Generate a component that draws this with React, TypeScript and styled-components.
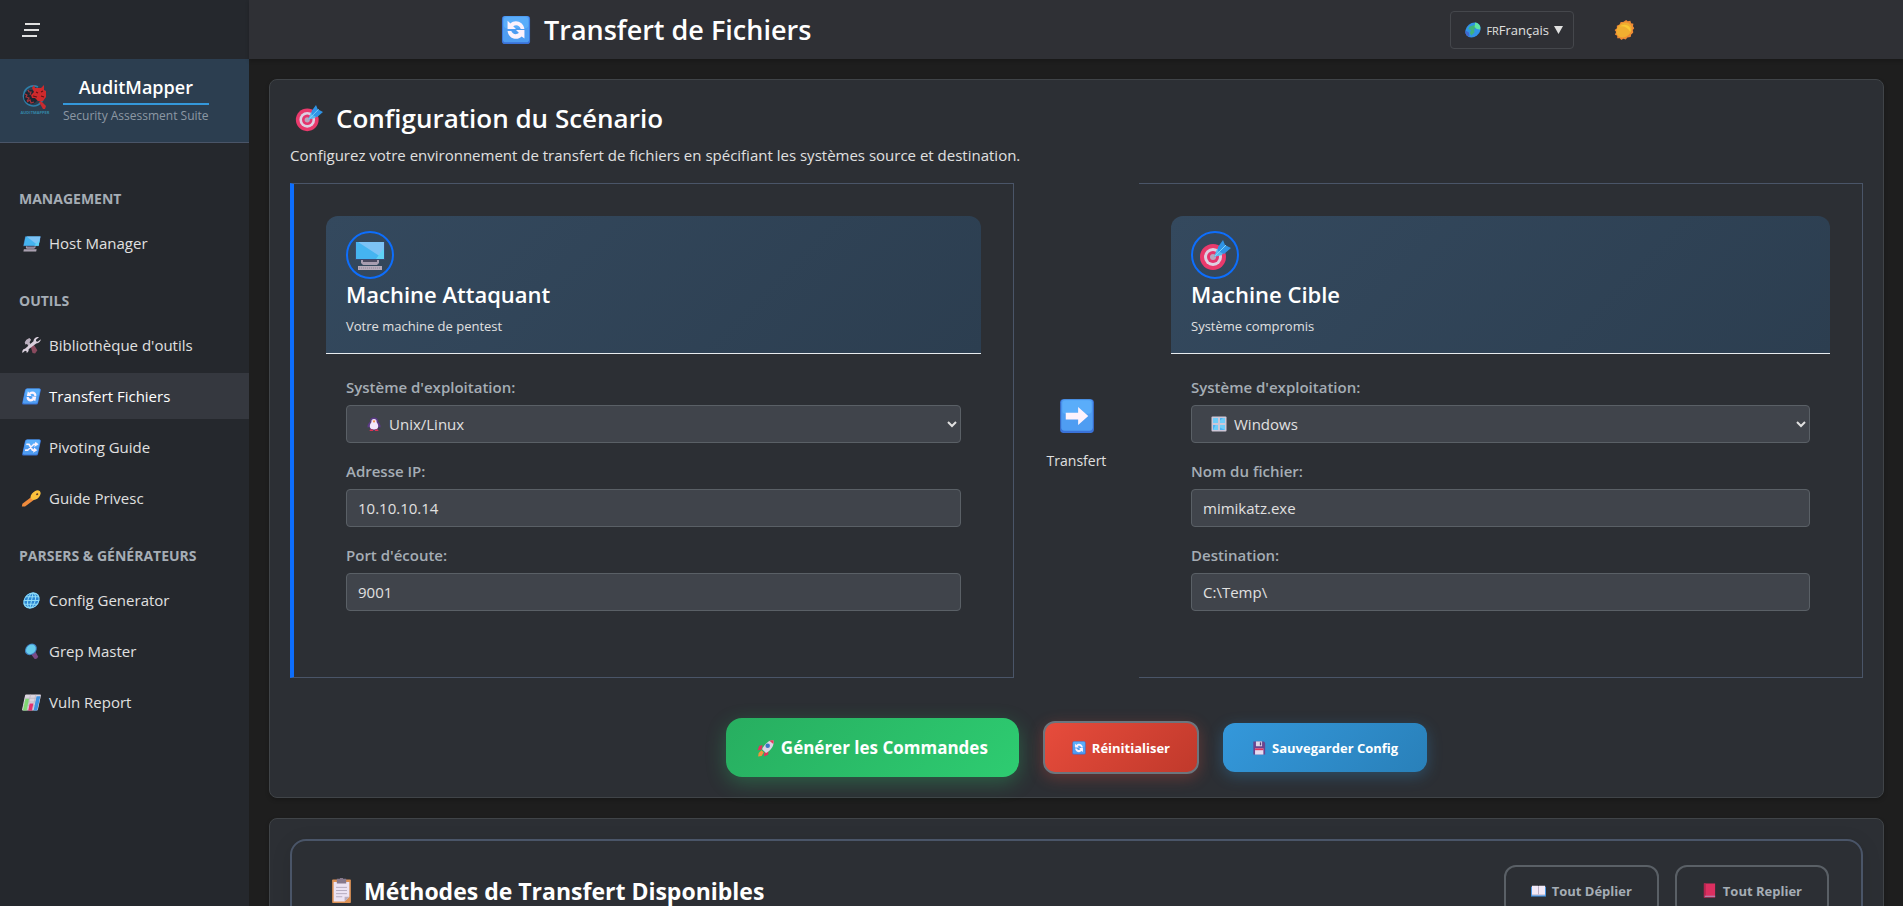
import React from 'react';
import styled, { createGlobalStyle, css } from 'styled-components';

const GlobalStyle = createGlobalStyle`
  *, *::before, *::after { box-sizing: border-box; }
  body {
    margin: 0;
    background: #1e1e1e;
    color: #e0e0e0;
    font-family: 'Open Sans', 'Noto Sans', sans-serif;
    font-size: 15px;
    line-height: 24px;
  }
  h1, h2, h3, p { margin: 0; }
  button, input, select { font-family: inherit; }
`;

/* ---------- Icons ---------- */

type IconName =
  | 'computer' | 'tools' | 'refresh' | 'shuffle' | 'key' | 'globe' | 'magnifier' | 'chart'
  | 'target' | 'earth' | 'sun' | 'penguin' | 'window' | 'arrow' | 'rocket' | 'floppy'
  | 'clipboard' | 'openBook' | 'book';

const BlueTile = () => (
  <>
    <rect x="1" y="1" width="30" height="30" rx="3" fill="#3a72d8" />
    <rect x="2" y="1" width="28" height="28" rx="3" fill="#4f9df2" />
    <rect x="3" y="2" width="26" height="12" rx="3" fill="#5aadfa" />
  </>
);

const glyphs: Record<IconName, React.ReactNode> = {
  computer: (
    <>
      <path d="M1 3h30v18H1z" fill="#3b4a72" />
      <path d="M2 3h28v17H2z" fill="#45b4f0" />
      <path d="M4 3h26v17z" fill="#7dc3f5" />
      <path d="M30 9v11H22z" fill="#5fd2f6" />
      <path d="M7 21h18v3l-2 2H9l-2-2z" fill="#a79db0" />
      <path d="M9 21h14v2H9z" fill="#4b4a60" />
      <path d="M4 27h24v4H4z" fill="#b3a9b8" />
      <path d="M5 29h22" stroke="#90869a" strokeDasharray="1 1" />
    </>
  ),
  tools: (
    <>
      <path d="M4 5l5-3 4 3-2 5 4 5-4 3-4-5-3 1-2-4z" fill="#b9aebd" />
      <path d="M13 14l4-3 12 14-3 6-5-1z" fill="#8a4a5e" />
      <path d="M31 4l-5 5-3-1-1-3 5-5c-6-1-10 3-9 8L5 22c-4 0-5 5-3 8l4-4 3 1 1 3c3-2 3-5 2-7l12-11c5 0 8-4 7-8z" fill="#d9cfdc" />
    </>
  ),
  refresh: (
    <>
      <BlueTile />
      <path d="M7 6v9h9l-3-3c3-2 7-1 8 3h4C24 7 15 4 10 9z" fill="#fdf2fc" />
      <path d="M25 25v-9h-9l3 3c-3 3-7 1-8-2H7c1 8 10 11 15 6z" fill="#fdf2fc" />
    </>
  ),
  shuffle: (
    <>
      <BlueTile />
      <path d="M5 10h5l9 11h3M5 21h5l9-11h3" stroke="#fdf2fc" strokeWidth="3" fill="none" />
      <path d="M21 5l7 5-7 5zM21 16l7 5-7 5z" fill="#fdf2fc" />
    </>
  ),
  key: (
    <>
      <path d="M15 13l6 6L7 31H1v-5z" fill="#ef8b3c" />
      <path d="M20 2c5-4 13 1 11 8-2 8-10 11-15 7s-2-11 4-15z" fill="#fbc23c" />
      <circle cx="25" cy="8" r="2" fill="#5a3a2c" />
    </>
  ),
  globe: (
    <>
      <circle cx="16" cy="16" r="15" fill="#2b86d4" />
      <g fill="none" stroke="#8fdcf7" strokeWidth="2">
        <circle cx="16" cy="16" r="14" />
        <ellipse cx="16" cy="16" rx="7" ry="14" />
        <path d="M16 2v28M2 16h28M4 9h24M4 23h24" />
      </g>
    </>
  ),
  magnifier: (
    <>
      <path d="M19 19l5-2 6 8c1 4-2 6-5 5l-7-7z" fill="#7a4a84" />
      <circle cx="14" cy="12" r="11" fill="#3f7fc0" />
      <circle cx="14" cy="12" r="9" fill="#66ccec" />
    </>
  ),
  chart: (
    <>
      <rect x="1" y="1" width="30" height="30" rx="2" fill="#dcd5df" />
      <path d="M1 8h30M1 15h30M1 22h30M11 1v30M21 1v30" stroke="#b7afbd" />
      <path d="M3 9h7v22H3z" fill="#7fd672" />
      <path d="M13 18h7v13h-7z" fill="#e3306e" />
      <path d="M23 4h7v27h-7z" fill="#3d93e2" />
    </>
  ),
  target: (
    <>
      <circle cx="14" cy="18" r="13" fill="#e93a6c" />
      <circle cx="14" cy="18" r="9" fill="#ddd0e2" />
      <circle cx="14" cy="18" r="6" fill="#e5356d" />
      <circle cx="14" cy="18" r="3" fill="#b9a6bd" />
      <path d="M15 18l3-8 5-3 3 3-3 6z" fill="#57b9f0" />
      <path d="M19 8l5-7 2 5 6 3-7 6-6-3z" fill="#2f93e6" />
      <path d="M16 17L27 6" stroke="#7fd4fa" />
    </>
  ),
  earth: (
    <>
      <circle cx="16" cy="16" r="15" fill="#3193e8" />
      <path d="M1 17a15 15 0 0 0 11 13l-3-9z" fill="#4069cf" />
      <path d="M8 9l9-3 4 4-3 5 2 6-5 6-4-5 1-6-6-2z" fill="#3fb37c" />
      <path d="M17 1c7 1 13 6 13 14l-7-1-5-4z" fill="#5fe6a4" />
    </>
  ),
  sun: (
    <>
      <path d="M16 0l3 2 4-1 2 4 4 1 0 4 3 3-2 3 2 4-3 3v4l-5 1-2 3-4-1-3 2-3-3-4 0-1-4-4-2 1-4-3-3 3-3-1-4 4-2 1-4 4 0z" fill="#ee8b34" />
      <circle cx="16" cy="16" r="12" fill="#f0ae30" />
      <path d="M8 10a12 12 0 0 1 19 9c-6-7-12-10-19-9z" fill="#fcc934" />
    </>
  ),
  penguin: (
    <>
      <path d="M16 3c6 0 8 3 8 8 3 4 6 7 5 12l-4-1-2 7H9l-2-7-4 1c-1-5 2-8 5-12 0-5 2-8 8-8z" fill="#5b3a86" />
      <path d="M16 6c4 0 6 3 5 6 3 4 4 7 3 11-1 5-15 5-16 0-1-4 0-7 3-11-1-3 1-6 5-6z" fill="#f3e6fb" />
      <path d="M13 9h6l-3 5z" fill="#f08a3c" />
      <path d="M8 27h6v3H7zM18 27h6l1 3h-7z" fill="#d8334f" />
    </>
  ),
  window: (
    <>
      <rect x="1" y="1" width="30" height="30" rx="2" fill="#cdc7d8" />
      <path d="M4 4h10v10H4zM18 4h10v10H18zM4 18h10v10H4zM18 18h10v10H18z" fill="#6fcdf9" />
      <path d="M4 28V18h5zM18 14V9l6-5h-6zM18 28v-5l10 5z" fill="#50b0f2" />
    </>
  ),
  arrow: (
    <>
      <BlueTile />
      <path d="M6 13h11V8l9 8-9 8v-5H6z" fill="#fdf2fc" />
    </>
  ),
  rocket: (
    <>
      <path d="M10 11l-6 1-3 8 7-1zM20 22l0 6-8 3 1-7z" fill="#e2335c" />
      <path d="M29 2c2 8-2 16-13 23l-7-7C14 8 21 2 29 2z" fill="#dcd3e4" />
      <path d="M29 2c1 3 0 6 0 7l-7-6c2-1 5-1 7-1z" fill="#e93a5c" />
      <circle cx="19" cy="12" r="4" fill="#3a76c4" />
      <path d="M8 20l4 4-4 6-6 1 1-6z" fill="#f4933b" />
    </>
  ),
  floppy: (
    <>
      <path d="M3 1h24l3 3v27H3z" fill="#6a4490" />
      <path d="M9 1h14v11H9z" fill="#ded5e8" />
      <path d="M18 3h3v7h-3z" fill="#57407c" />
      <path d="M7 17h19v14H7z" fill="#e6dcf0" />
      <path d="M7 17h19v4H7z" fill="#e2335c" />
    </>
  ),
  clipboard: (
    <>
      <rect x="4" y="2" width="24" height="30" rx="1" fill="#dd9256" />
      <path d="M6 5h20v19l-6 6H6z" fill="#ece3f3" />
      <path d="M26 24l-6 6v-6z" fill="#b9aebf" />
      <path d="M10 1h4a2 2 0 0 1 4 0h4v6H10z" fill="#86788c" />
      <path d="M9 12h14M9 16h14M9 20h14M9 24h8" stroke="#a89db2" strokeWidth="1" />
    </>
  ),
  openBook: (
    <>
      <path d="M0 8h32v21H0z" fill="#3b8fe0" />
      <path d="M2 6h13l1 1 1-1h13v20H2z" fill="#f1e9f7" />
      <path d="M16 7v18" stroke="#b6aabf" strokeWidth="2" />
      <path d="M2 24h28v2H2z" fill="#c9bfd2" />
    </>
  ),
  book: (
    <>
      <path d="M4 1h24v30H4z" fill="#dc2f60" />
      <path d="M4 1h4v30H4z" fill="#b3264f" />
      <path d="M6 27h22v3H6z" fill="#b77aa8" />
    </>
  ),
};

const Glyph = styled.svg<{ $size: number; $slanted?: boolean }>`
  flex: none;
  display: block;
  width: ${p => p.$size}px;
  height: ${p => p.$size}px;
  ${p => p.$slanted && css`transform: skewX(-12deg);`}
`;

const Icon = ({ name, size, slanted }: { name: IconName; size: number; slanted?: boolean }) => (
  <Glyph viewBox="0 0 32 32" $size={size} $slanted={slanted} aria-hidden="true">
    {glyphs[name]}
  </Glyph>
);

const Logo = () => (
  <Glyph viewBox="0 0 32 32" $size={32} aria-hidden="true">
    <path d="M19 3a10 10 0 1 0 5 12" fill="none" stroke="#2f7ea8" strokeWidth="1.600" />
    <circle cx="12" cy="13" r="7" fill="#1c2632" />
    <path d="M6 10l2 1-1 2 3 1-2 3M9 6l1 2 2 0-1 3M8 18l3-2 1 3 3-1" fill="none" stroke="#a8323a" strokeWidth="1.200" />
    <path d="M13 4l2-3 1 3h6l3-3 0 5 2 1v6l-3 4-5 0-3-3-3 0-1-3 3-3z" fill="#cf2a2c" />
    <path d="M17 8l2 1M22 8l2-1M14 12l4 1M22 12l3 1" stroke="#5e1217" strokeWidth="1.200" />
    <path d="M20 18l2-1 5 5-1 3-2 0z" fill="#c92c2f" />
    <text x="16" y="30" textAnchor="middle" fontSize="4" fontWeight="700" fill="#3488a8">AUDITMAPPER</text>
  </Glyph>
);

/* ---------- Shell ---------- */

const Shell = styled.div`
  display: flex;
  height: 100vh;
  overflow: hidden;
`;

const Sidebar = styled.aside`
  flex: none;
  width: 249px;
  background: #25282d;
`;

const MenuBar = styled.div`
  display: flex;
  align-items: center;
  height: 59px;
  padding: 0 20px;
`;

const MenuButton = styled.button`
  display: flex;
  padding: 0;
  border: 0;
  background: none;
  color: #e0e0e0;
  cursor: pointer;
`;

const Brand = styled.div`
  display: flex;
  align-items: center;
  gap: 12px;
  height: 84px;
  padding: 0 19px 1px;
  background: #2c3e50;
  border-bottom: 1px solid #4a5568;
`;

const BrandText = styled.div`
  text-align: center;
`;

const BrandName = styled.div`
  padding-bottom: 3px;
  border-bottom: 2px solid #3498db;
  color: #fff;
  font-size: 18px;
  font-weight: 600;
  line-height: 26px;
`;

const BrandTagline = styled.div`
  color: #8c98a4;
  font-size: 12px;
  line-height: 22px;
  white-space: nowrap;
`;

const Nav = styled.nav`
  padding-top: 46px;
`;

const NavGroup = styled.section`
  margin-bottom: 25px;
`;

const NavHeading = styled.h3`
  margin-bottom: 11px;
  padding: 0 19px;
  color: #a5adb5;
  font-size: 14px;
  font-weight: 700;
  line-height: 20px;
`;

const NavList = styled.div`
  display: grid;
  gap: 5px;
`;

const NavLink = styled.a<{ $active?: boolean }>`
  display: flex;
  align-items: center;
  gap: 9px;
  height: 46px;
  padding: 0 23px;
  color: ${p => (p.$active ? '#fff' : '#e0e0e0')};
  background: ${p => (p.$active ? '#35383f' : 'transparent')};
  text-decoration: none;
`;

const Main = styled.div`
  flex: 1;
  min-width: 0;
  display: flex;
  flex-direction: column;
`;

const Header = styled.header`
  position: relative;
  flex: none;
  height: 59px;
  background: #2f3035;
  box-shadow: 0 2px 4px rgba(0, 0, 0, 0.2);
`;

const HeaderInner = styled.div`
  display: flex;
  align-items: center;
  justify-content: space-between;
  height: 100%;
  max-width: 1200px;
  margin: 0 auto;
  padding: 0 26px 0 25px;
`;

const PageTitle = styled.h1`
  display: flex;
  align-items: center;
  gap: 13px;
  color: #fff;
  font-size: 27px;
  font-weight: 600;
  line-height: 40px;
`;

const HeaderActions = styled.div`
  display: flex;
  align-items: center;
  gap: 24px;
`;

const LanguageButton = styled.button`
  display: flex;
  align-items: center;
  gap: 5px;
  height: 38px;
  padding: 0 10px 0 14px;
  border: 1px solid #45474c;
  border-radius: 4px;
  background: none;
  color: #e0e0e0;
  font-size: 13px;
`;

const CountryCode = styled.small`
  font-size: 11px;
`;

const ThemeButton = styled.button`
  display: grid;
  place-items: center;
  width: 52px;
  height: 38px;
  border: 0;
  background: none;
`;

const Content = styled.main`
  flex: 1;
  min-height: 0;
  display: flex;
  flex-direction: column;
  gap: 20px;
  padding: 20px 19px 20px 20px;
  overflow-y: auto;
  scrollbar-width: none;
`;

const Card = styled.section`
  flex: none;
  padding: 20px;
  border: 1px solid #404448;
  border-radius: 8px;
  background: #2c2f34;
  box-shadow: 0 2px 4px rgba(0, 0, 0, 0.2);
`;

const CardTitle = styled.h2`
  display: flex;
  align-items: center;
  gap: 13px;
  padding-left: 5px;
  color: #fff;
  font-size: 26px;
  font-weight: 600;
  line-height: 36px;
`;

const CardIntro = styled.p`
  margin: 7px 0 16px;
`;

/* ---------- Scenario ---------- */

const Scenario = styled.div`
  display: grid;
  grid-template-columns: 1fr 125px 1fr;
`;

const Machine = styled.section<{ $source?: boolean }>`
  padding: 32px;
  border: 1px solid #4a5568;
  border-left: ${p => (p.$source ? '4px solid #0d6efd' : '0')};
`;

const MachineHead = styled.header`
  padding: 15px 20px;
  border-bottom: 1px solid #e8ecef;
  border-radius: 12px 12px 0 0;
  background: linear-gradient(135deg, #34495e, #2c3e50);
`;

const Avatar = styled.div`
  display: grid;
  place-items: center;
  width: 48px;
  height: 48px;
  border: 2px solid #0d6efd;
  border-radius: 50%;
`;

const MachineName = styled.h3`
  color: #fff;
  font-size: 22px;
  font-weight: 600;
  line-height: 31px;
`;

const MachineNote = styled.p`
  margin-top: 4px;
  font-size: 13px;
`;

const Fields = styled.div`
  display: grid;
  gap: 17px;
  padding: 22px 20px 34px;
`;

const Field = styled.div`
  display: grid;
  gap: 7px;
`;

const Label = styled.label`
  color: #a5adb5;
  font-weight: 600;
  line-height: 22px;
`;

const control = css`
  width: 100%;
  height: 38px;
  border: 1px solid #5a6066;
  border-radius: 4px;
  background: #40444b;
  color: #e0e0e0;
  font-size: 15px;
`;

const TextInput = styled.input`
  ${control}
  padding: 0 11px;
`;

const SelectWrap = styled.div`
  position: relative;
`;

const SelectIcon = styled.span`
  position: absolute;
  top: 11px;
  left: 20px;
  pointer-events: none;
`;

const Select = styled.select`
  ${control}
  display: block;
  padding: 0 0 0 38px;
`;

const Direction = styled.div`
  display: flex;
  flex-direction: column;
  align-items: center;
  justify-content: center;
  gap: 15px;
  padding-top: 9px;
  font-size: 14px;
`;

const Actions = styled.div`
  display: flex;
  align-items: center;
  justify-content: center;
  gap: 24px;
  margin-top: 40px;
`;

const variants = {
  generate: css`
    height: 59px;
    padding: 0 31px;
    border: 0;
    border-radius: 16px;
    background: linear-gradient(135deg, #27ae60, #2ecc71);
    box-shadow: 0 6px 20px rgba(46, 204, 113, 0.3);
    font-size: 17px;
  `,
  reset: css`
    height: 53px;
    padding: 0 27px;
    border: 2px solid #6c757d;
    background: linear-gradient(135deg, #e74c3c, #c0392b);
    box-shadow: 0 4px 15px rgba(231, 76, 60, 0.3);
  `,
  save: css`
    height: 49px;
    padding: 0 29px;
    border: 0;
    background: linear-gradient(135deg, #3498db, #2980b9);
    box-shadow: 0 4px 15px rgba(52, 152, 219, 0.3);
  `,
  outline: css`
    height: 51px;
    padding: 0 25px;
    border: 2px solid #5a6066;
    background: none;
    color: #a5adb5;
  `,
};

const ActionButton = styled.button<{ $variant: keyof typeof variants }>`
  display: flex;
  align-items: center;
  gap: 6px;
  border-radius: 12px;
  color: #fff;
  font-size: 13px;
  font-weight: 700;
  white-space: nowrap;
  ${p => variants[p.$variant]}
`;

/* ---------- Methods ---------- */

const Methods = styled.div`
  display: flex;
  align-items: center;
  justify-content: space-between;
  padding: 24px 32px;
  border: 2px solid #4a5568;
  border-radius: 16px;
  box-shadow: 0 4px 20px rgba(0, 0, 0, 0.1);
`;

const MethodsTitle = styled.h2`
  display: flex;
  align-items: center;
  gap: 10px;
  padding-left: 5px;
  color: #fff;
  font-size: 23px;
  font-weight: 700;
  line-height: 36px;
`;

const ButtonRow = styled.div`
  display: flex;
  gap: 16px;
`;

type Entry = { icon: IconName; label: string; active?: boolean };

const navigation: { heading: string; items: Entry[] }[] = [
  { heading: 'MANAGEMENT', items: [{ icon: 'computer', label: 'Host Manager' }] },
  {
    heading: 'OUTILS',
    items: [
      { icon: 'tools', label: "Bibliothèque d'outils" },
      { icon: 'refresh', label: 'Transfert Fichiers', active: true },
      { icon: 'shuffle', label: 'Pivoting Guide' },
      { icon: 'key', label: 'Guide Privesc' },
    ],
  },
  {
    heading: 'PARSERS & GÉNÉRATEURS',
    items: [
      { icon: 'globe', label: 'Config Generator' },
      { icon: 'magnifier', label: 'Grep Master' },
      { icon: 'chart', label: 'Vuln Report' },
    ],
  },
];

const systems = ['Unix/Linux', 'Windows'];

const SystemField = ({ id, icon, value }: { id: string; icon: IconName; value: string }) => (
  <Field>
    <Label htmlFor={id}>Système d'exploitation:</Label>
    <SelectWrap>
      <Select id={id} defaultValue={value}>
        {systems.map(s => <option key={s}>{s}</option>)}
      </Select>
      <SelectIcon><Icon name={icon} size={16} /></SelectIcon>
    </SelectWrap>
  </Field>
);

const TextField = ({ id, label, value }: { id: string; label: string; value: string }) => (
  <Field>
    <Label htmlFor={id}>{label}</Label>
    <TextInput id={id} type="text" defaultValue={value} />
  </Field>
);

export default function App() {
  return (
    <>
      <GlobalStyle />
      <Shell>
        <Sidebar>
          <MenuBar>
            <MenuButton type="button" aria-label="Menu">
              <svg width="22" height="18" viewBox="0 0 22 18" aria-hidden="true">
                <path d="M5 3h15M4 9h15M2 15h15" stroke="currentColor" strokeWidth="2" />
              </svg>
            </MenuButton>
          </MenuBar>
          <Brand>
            <Logo />
            <BrandText>
              <BrandName>AuditMapper</BrandName>
              <BrandTagline>Security Assessment Suite</BrandTagline>
            </BrandText>
          </Brand>
          <Nav>
            {navigation.map(group => (
              <NavGroup key={group.heading}>
                <NavHeading>{group.heading}</NavHeading>
                <NavList>
                  {group.items.map(item => (
                    <NavLink key={item.label} href="#" $active={item.active}>
                      <Icon name={item.icon} size={17} slanted />
                      {item.label}
                    </NavLink>
                  ))}
                </NavList>
              </NavGroup>
            ))}
          </Nav>
        </Sidebar>
        <Main>
          <Header>
            <HeaderInner>
              <PageTitle><Icon name="refresh" size={30} />Transfert de Fichiers</PageTitle>
              <HeaderActions>
                <LanguageButton type="button">
                  <Icon name="earth" size={16} slanted />
                  <span><CountryCode>FR</CountryCode>Français</span>
                  <svg width="9" height="8" viewBox="0 0 9 8" aria-hidden="true">
                    <path d="M0 0h9L4.500 8z" fill="currentColor" />
                  </svg>
                </LanguageButton>
                <ThemeButton type="button" aria-label="Thème">
                  <Icon name="sun" size={20} slanted />
                </ThemeButton>
              </HeaderActions>
            </HeaderInner>
          </Header>
          <Content>
            <Card>
              <CardTitle><Icon name="target" size={28} />Configuration du Scénario</CardTitle>
              <CardIntro>
                Configurez votre environnement de transfert de fichiers en spécifiant les systèmes source et destination.
              </CardIntro>
              <Scenario>
                <Machine $source>
                  <MachineHead>
                    <Avatar><Icon name="computer" size={32} /></Avatar>
                    <MachineName>Machine Attaquant</MachineName>
                    <MachineNote>Votre machine de pentest</MachineNote>
                  </MachineHead>
                  <Fields>
                    <SystemField id="source-os" icon="penguin" value="Unix/Linux" />
                    <TextField id="ip" label="Adresse IP:" value="10.10.10.14" />
                    <TextField id="port" label="Port d'écoute:" value="9001" />
                  </Fields>
                </Machine>
                <Direction>
                  <Icon name="arrow" size={36} />
                  <span>Transfert</span>
                </Direction>
                <Machine>
                  <MachineHead>
                    <Avatar><Icon name="target" size={32} /></Avatar>
                    <MachineName>Machine Cible</MachineName>
                    <MachineNote>Système compromis</MachineNote>
                  </MachineHead>
                  <Fields>
                    <SystemField id="target-os" icon="window" value="Windows" />
                    <TextField id="file" label="Nom du fichier:" value="mimikatz.exe" />
                    <TextField id="destination" label="Destination:" value={'C:\\Temp\\'} />
                  </Fields>
                </Machine>
              </Scenario>
              <Actions>
                <ActionButton type="button" $variant="generate">
                  <Icon name="rocket" size={18} />Générer les Commandes
                </ActionButton>
                <ActionButton type="button" $variant="reset">
                  <Icon name="refresh" size={14} />Réinitialiser
                </ActionButton>
                <ActionButton type="button" $variant="save">
                  <Icon name="floppy" size={14} />Sauvegarder Config
                </ActionButton>
              </Actions>
            </Card>
            <Card>
              <Methods>
                <MethodsTitle><Icon name="clipboard" size={25} />Méthodes de Transfert Disponibles</MethodsTitle>
                <ButtonRow>
                  <ActionButton type="button" $variant="outline">
                    <Icon name="openBook" size={15} />Tout Déplier
                  </ActionButton>
                  <ActionButton type="button" $variant="outline">
                    <Icon name="book" size={15} />Tout Replier
                  </ActionButton>
                </ButtonRow>
              </Methods>
            </Card>
          </Content>
        </Main>
      </Shell>
    </>
  );
}
